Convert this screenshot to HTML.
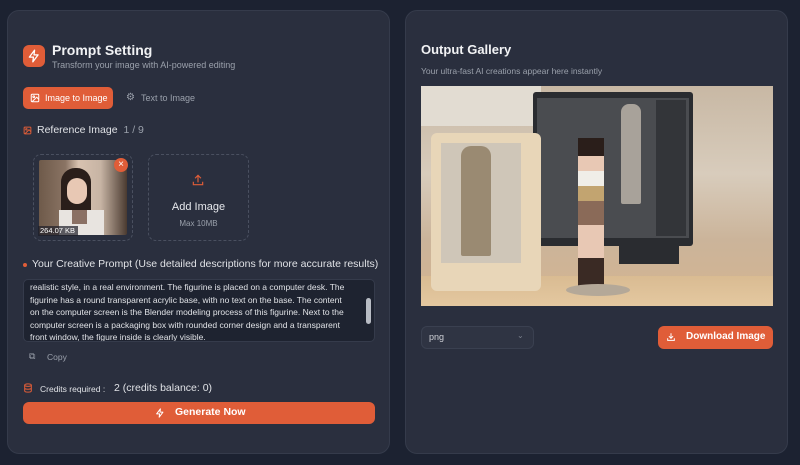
<!DOCTYPE html>
<html><head><meta charset="utf-8"><style>
*{box-sizing:border-box;margin:0;padding:0}
body{width:800px;height:465px;background:#1c2231;font-family:"Liberation Sans",sans-serif;color:#e6e8ec;position:relative;overflow:hidden}
.card{position:absolute;background:#2a2f3e;border:1px solid #353b4b;border-radius:12px}
.abs{position:absolute}
.or{background:#e05d38}
</style></head><body>
<div class="card" style="left:7px;top:10px;width:383px;height:444px"></div>
<div class="card" style="left:405px;top:10px;width:383px;height:444px"></div>

<div class="abs or" style="left:23px;top:45px;width:22px;height:22px;border-radius:6px"></div>
<svg class="abs" style="left:27px;top:49px" width="14" height="14" viewBox="0 0 24 24" fill="none" stroke="#fff" stroke-width="2.2" stroke-linejoin="round"><path d="M13 2L4 14h7l-1 8 9-12h-7z"/></svg>
<div class="abs" style="left:52px;top:42px;font-size:14px;font-weight:bold;color:#f1f2f4">Prompt Setting</div>
<div class="abs" style="left:52px;top:60px;font-size:9px;color:#9aa0ab">Transform your image with AI-powered editing</div>

<div class="abs or" style="left:23px;top:87px;width:90px;height:22px;border-radius:5px"></div>
<svg class="abs" style="left:30px;top:93px" width="10" height="10" viewBox="0 0 24 24" fill="none" stroke="#fff" stroke-width="2.4"><rect x="3" y="3" width="18" height="18" rx="2"/><circle cx="9" cy="9" r="2"/><path d="M21 15l-5-5L5 21"/></svg>
<div class="abs" style="left:45px;top:93px;font-size:9px;color:#fff">Image to Image</div>
<div class="abs" style="left:126px;top:92px;font-size:10px;color:#9aa0ab">⚙</div>
<div class="abs" style="left:141px;top:93px;font-size:9px;color:#9aa0ab">Text to Image</div>

<svg class="abs" style="left:23px;top:126px" width="9" height="9" viewBox="0 0 24 24" fill="none" stroke="#e05d38" stroke-width="2.6"><rect x="3" y="3" width="18" height="18" rx="2"/><circle cx="9" cy="9" r="2"/><path d="M21 15l-5-5L5 21"/></svg>
<div class="abs" style="left:37px;top:124px;font-size:10.5px;color:#e0e2e6">Reference Image <span style="color:#9aa0ab;margin-left:3px">1 / 9</span></div>

<div class="abs" style="left:33px;top:154px;width:100px;height:87px;border:1px dashed #4a5060;border-radius:8px"></div>
<div class="abs" style="left:39px;top:160px;width:88px;height:75px;background:linear-gradient(90deg,#6e5a4a 0%,#8a7464 30%,#d8c2b0 45%,#c7b4a4 70%,#4a3a30 100%);border-radius:2px;overflow:hidden">
<div class="abs" style="left:22px;top:8px;width:30px;height:67px;background:#2a1e1a;border-radius:14px 14px 0 0"></div>
<div class="abs" style="left:28px;top:18px;width:20px;height:26px;background:#e8c8b4;border-radius:10px"></div>
<div class="abs" style="left:20px;top:50px;width:45px;height:25px;background:#e8e4e0"></div>
<div class="abs" style="left:33px;top:50px;width:15px;height:14px;background:#8a7064"></div>
</div>
<div class="abs" style="left:38px;top:226px;width:40px;height:10px;background:rgba(30,30,40,.7);font-size:7.5px;color:#fff;padding-left:2px">264.07 KB</div>
<div class="abs or" style="left:114px;top:158px;width:14px;height:14px;border-radius:50%;color:#fff;font-size:10px;text-align:center;line-height:14px">×</div>

<div class="abs" style="left:148px;top:154px;width:101px;height:87px;border:1px dashed #4a5060;border-radius:8px"></div>
<svg class="abs" style="left:191px;top:173px" width="14" height="14" viewBox="0 0 24 24" fill="none" stroke="#e05d38" stroke-width="2"><path d="M12 16V4M7 9l5-5 5 5M4 15v5h16v-5"/></svg>
<div class="abs" style="left:148px;top:201px;width:101px;text-align:center;font-size:11px;color:#e6e8ec">Add Image</div>
<div class="abs" style="left:148px;top:219px;width:101px;text-align:center;font-size:8px;color:#9aa0ab">Max 10MB</div>

<div class="abs or" style="left:23px;top:263px;width:4px;height:4px;border-radius:50%"></div>
<div class="abs" style="left:32px;top:258px;font-size:10.5px;color:#e0e2e6">Your Creative Prompt (Use detailed descriptions for more accurate results)</div>
<div class="abs" style="left:23px;top:279px;width:352px;height:63px;background:#1e2330;border:1px solid #353b4b;border-radius:5px;overflow:hidden">
<div style="padding:1px 12px 0 6px;font-size:8.5px;line-height:12.5px;color:#e0e2e6;white-space:nowrap">realistic style, in a real environment. The figurine is placed on a computer desk. The<br>figurine has a round transparent acrylic base, with no text on the base. The content<br>on the computer screen is the Blender modeling process of this figurine. Next to the<br>computer screen is a packaging box with rounded corner design and a transparent<br>front window, the figure inside is clearly visible.</div>
<div class="abs" style="right:3px;top:18px;width:5px;height:26px;background:#b8bcc4;border-radius:3px"></div>
</div>
<div class="abs" style="left:29px;top:351px;font-size:9px;color:#9aa0ab">⧉</div>
<div class="abs" style="left:47px;top:352px;font-size:8.5px;color:#9aa0ab">Copy</div>

<svg class="abs" style="left:23px;top:383px" width="10" height="10" viewBox="0 0 24 24" fill="none" stroke="#e05d38" stroke-width="2.4"><ellipse cx="12" cy="5" rx="8" ry="3"/><path d="M4 5v14c0 1.7 3.6 3 8 3s8-1.3 8-3V5M4 12c0 1.7 3.6 3 8 3s8-1.3 8-3"/></svg>
<div class="abs" style="left:40px;top:384px;font-size:8.5px;color:#e0e2e6">Credits required :</div>
<div class="abs" style="left:114px;top:382px;font-size:10.5px;color:#e0e2e6">2 (credits balance: 0)</div>
<div class="abs or" style="left:23px;top:402px;width:352px;height:22px;border-radius:6px"></div>
<svg class="abs" style="left:155px;top:408px" width="10" height="10" viewBox="0 0 24 24" fill="none" stroke="#fff" stroke-width="2.4" stroke-linejoin="round"><path d="M13 2L4 14h7l-1 8 9-12h-7z"/></svg>
<div class="abs" style="left:175px;top:406px;font-size:10.5px;font-weight:bold;color:#fff">Generate Now</div>

<div class="abs" style="left:421px;top:42px;font-size:13px;font-weight:bold;color:#f1f2f4">Output Gallery</div>
<div class="abs" style="left:421px;top:66px;font-size:8.5px;color:#9aa0ab">Your ultra-fast AI creations appear here instantly</div>

<div class="abs" style="left:421px;top:86px;width:352px;height:220px;overflow:hidden;background:linear-gradient(180deg,#c8b8a4 0%,#d8ccbc 40%,#cbb49a 70%,#d4b590 100%)">
<div class="abs" style="left:0;top:0;width:120px;height:40px;background:#e2dcd2"></div>
<div class="abs" style="left:0;top:190px;width:352px;height:30px;background:linear-gradient(180deg,#d9bb92,#e4c8a0)"></div>
<div class="abs" style="left:112px;top:6px;width:160px;height:154px;background:#2a2c30;border-radius:3px"></div>
<div class="abs" style="left:116px;top:12px;width:152px;height:140px;background:#4a4c50"></div>
<div class="abs" style="left:235px;top:14px;width:30px;height:136px;background:#333539"></div>
<div class="abs" style="left:200px;top:18px;width:20px;height:100px;background:#a8a29a;border-radius:8px 8px 2px 2px"></div>
<div class="abs" style="left:198px;top:154px;width:60px;height:24px;background:#2a2c30"></div>
<div class="abs" style="left:10px;top:47px;width:110px;height:158px;background:#e8d6b8;border-radius:6px"></div>
<div class="abs" style="left:20px;top:57px;width:80px;height:120px;background:#cfc6b8"></div>
<div class="abs" style="left:40px;top:60px;width:30px;height:110px;background:#9a8a72;border-radius:10px 10px 2px 2px"></div>
<div class="abs" style="left:157px;top:52px;width:26px;height:150px;background:linear-gradient(180deg,#2a1e1a 0 12%,#e8c8b4 12% 22%,#f0eee8 22% 32%,#c2a470 32% 42%,#8a6a58 42% 58%,#e8c8b4 58% 80%,#3a2a24 80%)"></div>
<div class="abs" style="left:145px;top:198px;width:64px;height:12px;background:#b4a898;border-radius:50%"></div>
</div>

<div class="abs" style="left:421px;top:326px;width:113px;height:23px;background:#2f3443;border:1px solid #3a4050;border-radius:6px"></div>
<div class="abs" style="left:429px;top:332px;font-size:9px;color:#d0d2d8">png</div>
<div class="abs" style="left:517px;top:331px;font-size:8px;color:#7a808c">⌄</div>
<div class="abs or" style="left:658px;top:326px;width:115px;height:23px;border-radius:6px"></div>
<svg class="abs" style="left:666px;top:332px" width="10" height="10" viewBox="0 0 24 24" fill="none" stroke="#fff" stroke-width="2.4"><path d="M12 3v12M7 10l5 5 5-5M4 15v5h16v-5"/></svg>
<div class="abs" style="left:686px;top:331px;font-size:10px;font-weight:bold;color:#fff">Download Image</div>
</body></html>
